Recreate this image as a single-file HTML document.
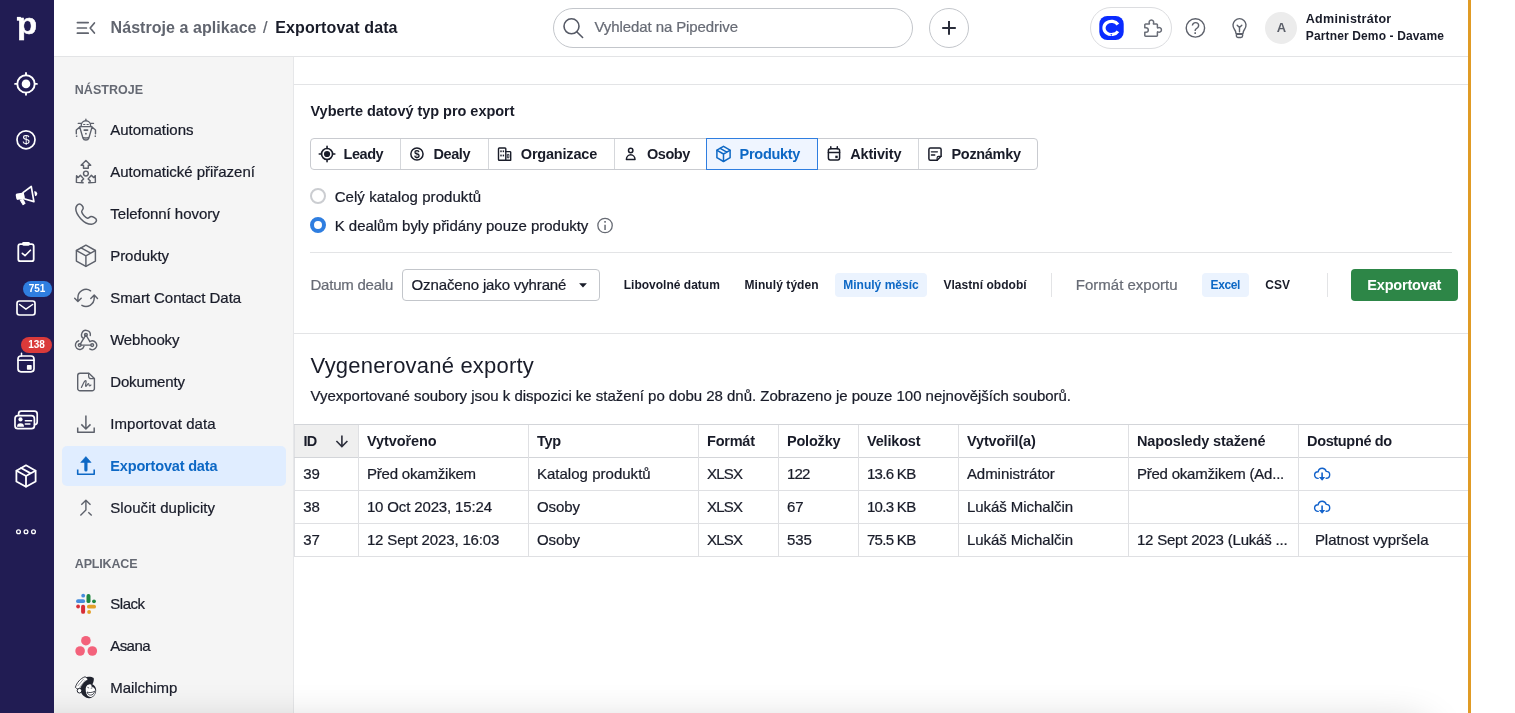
<!DOCTYPE html>
<html lang="cs"><head><meta charset="utf-8"><title>Exportovat data - Pipedrive</title>
<style>

*{box-sizing:border-box;margin:0;padding:0}
html,body{width:1515px;height:713px;overflow:hidden;background:#fff}
body{position:relative;font-family:"Liberation Sans",Arial,sans-serif;-webkit-font-smoothing:antialiased}
.b{position:absolute}
.t{position:absolute;white-space:pre;display:block}
#ico{position:absolute;left:0;top:0;width:1515px;height:713px;pointer-events:none;will-change:transform}
#txt{position:absolute;left:0;top:0;width:1515px;height:713px;will-change:transform}
#nav{left:0;top:0;width:54px;height:713px;background:#211c53}
#hdr{left:54px;top:0;width:1414px;height:57px;background:#fff;border-bottom:1px solid #e3e4e6}
#side{left:54px;top:57px;width:240px;height:656px;background:#f5f5f5;border-right:1px solid #e6e7e9}
#act{left:62px;top:446px;width:224px;height:40px;background:#e0edff;border-radius:5px}
#orange{left:1468px;top:0;width:3px;height:713px;background:#e09b25}
.hl{position:absolute;height:1px;background:#e3e4e6}
.vl{position:absolute;width:1px;background:#e3e4e6}
.pill{position:absolute;border:1px solid #c3c6cb;background:#fff}
.chip{position:absolute;background:#ebf3fe;border-radius:4px}
.badge{position:absolute;border-radius:8px;height:16px}
#tbl{left:294px;top:424px;width:1174px;height:133px;border-left:1px solid #dfe0e3}

</style></head>
<body>

<div class="b" id="nav"></div>
<div class="b" id="hdr"></div>
<div class="b" id="side"></div>
<div class="b" id="act"></div>
<div class="b" style="left:54px;top:0;width:1414px;height:713px;overflow:hidden"><div class="b" style="left:-60px;top:724px;width:1436px;height:60px;border-radius:20px;box-shadow:0 0 40px 0 rgba(0,0,0,0.2)"></div></div>
<div class="b" id="orange"></div>
<!-- header widgets -->
<div class="pill" style="left:553px;top:8px;width:360px;height:40px;border-radius:20px"></div>
<div class="pill" style="left:929px;top:8px;width:40px;height:40px;border-radius:20px"></div>
<div class="pill" style="left:1090px;top:7px;width:82px;height:42px;border-radius:21px;border-color:#dcdde0"></div>
<div class="b" style="left:1265.4px;top:11.9px;width:32px;height:32px;border-radius:16px;background:#ececec"></div>
<div class="badge" style="left:22.5px;top:281px;width:29.5px;background:#2f7ee0"></div>
<div class="badge" style="left:21.3px;top:337px;width:30.7px;background:#da3a3a"></div>
<!-- main lines -->
<div class="hl" style="left:294px;top:84px;width:1174px"></div>
<div class="hl" style="left:310px;top:252px;width:1142px"></div>
<div class="hl" style="left:294px;top:333px;width:1174px"></div>
<!-- segmented buttons -->
<div class="b" style="left:310px;top:138px;width:728px;height:32px;border:1px solid #c9cbd0;border-radius:4px;background:#fff"></div>
<div class="vl" style="left:400px;top:139px;height:30px;background:#d5d7db"></div>
<div class="vl" style="left:488px;top:139px;height:30px;background:#d5d7db"></div>
<div class="vl" style="left:614px;top:139px;height:30px;background:#d5d7db"></div>
<div class="vl" style="left:918px;top:139px;height:30px;background:#d5d7db"></div>
<div class="b" style="left:706px;top:138px;width:112px;height:32px;border:1px solid #2f7ee0;background:#eff5ff"></div>
<!-- radios -->
<div class="b" style="left:310px;top:188px;width:16px;height:16px;border-radius:8px;border:2px solid #cbcdd1;background:#fff"></div>
<div class="b" style="left:310px;top:217px;width:16px;height:16px;border-radius:8px;border:4px solid #2f7ee0;background:#fff"></div>
<!-- filter row -->
<div class="b" style="left:402px;top:269px;width:198px;height:32px;border:1px solid #c3c6cb;border-radius:4px;background:#fff"></div>
<div class="chip" style="left:834.7px;top:273px;width:92.6px;height:24px"></div>
<div class="chip" style="left:1201.8px;top:273px;width:47.2px;height:24px"></div>
<div class="vl" style="left:1051px;top:273px;height:24px"></div>
<div class="vl" style="left:1327px;top:273px;height:24px"></div>
<div class="b" style="left:1351px;top:269px;width:107px;height:32px;border-radius:4px;background:#2d8647"></div>
<!-- table -->
<div class="b" id="tbl"></div>
<div class="b" style="left:295px;top:425px;width:63px;height:32px;background:#efefef"></div>
<div class="hl" style="left:294px;top:424px;width:1174px;background:#d3d5d9"></div>
<div class="hl" style="left:294px;top:457px;width:1174px;background:#d3d5d9"></div>
<div class="hl" style="left:294px;top:490px;width:1174px;background:#dfe0e3"></div>
<div class="hl" style="left:294px;top:523px;width:1174px;background:#dfe0e3"></div>
<div class="hl" style="left:294px;top:556px;width:1174px;background:#dfe0e3"></div>
<div class="vl" style="left:358px;top:425px;height:131px;background:#dfe0e3"></div>
<div class="vl" style="left:528px;top:425px;height:131px;background:#dfe0e3"></div>
<div class="vl" style="left:698px;top:425px;height:131px;background:#dfe0e3"></div>
<div class="vl" style="left:778px;top:425px;height:131px;background:#dfe0e3"></div>
<div class="vl" style="left:858px;top:425px;height:131px;background:#dfe0e3"></div>
<div class="vl" style="left:958px;top:425px;height:131px;background:#dfe0e3"></div>
<div class="vl" style="left:1128px;top:425px;height:131px;background:#dfe0e3"></div>
<div class="vl" style="left:1298px;top:425px;height:131px;background:#dfe0e3"></div>
<svg id="ico" width="1515" height="713" viewBox="0 0 1515 713">
<text transform="translate(17.1 33.6) scale(1.13 1)" x="0" y="0" font-family="Liberation Sans,Arial,sans-serif" font-weight="700" font-size="29.3" fill="#fff" stroke="#fff" stroke-width="0.4" stroke-linejoin="round">p</text>
<rect x="16.900" y="16.900" width="4" height="3.800" fill="#fff"/>
<g fill="none" stroke="#fff" stroke-width="1.9" stroke-linecap="round" stroke-linejoin="round" ><circle cx="26" cy="83.9" r="8.7"/><path d="M26 73v2M26 92.800v2M15.100 83.900h2M34.900 83.900h2"/></g><circle cx="26" cy="83.9" r="4.3" fill="#fff"/>
<g fill="none" stroke="#fff" stroke-width="1.7" stroke-linecap="round" stroke-linejoin="round" ><circle cx="26" cy="139.8" r="9"/></g><text x="26" y="144.400" text-anchor="middle" font-family="Liberation Sans,Arial,sans-serif" font-size="13" fill="#fff">$</text>
<g transform="translate(0 -1.2) rotate(-10 26 196)"><rect x="15.800" y="193.200" width="8.200" height="6.400" rx="1.600" fill="#fff"/><path d="M23.400 193.300 L32.600 188.700 L32.600 204.100 L23.400 199.500 Z" fill="none" stroke="#fff" stroke-width="1.700" stroke-linejoin="round"/><path d="M19.400 200 L21.400 205.200 L23.600 204.300 L22.300 200 Z" fill="#fff" stroke="#fff" stroke-width="1" stroke-linejoin="round"/><path d="M34.700 193.900 a2.500 2.500 0 0 1 0 5 Z" fill="#fff"/></g>
<g fill="none" stroke="#fff" stroke-width="1.8" stroke-linecap="round" stroke-linejoin="round" ><rect x="18.3" y="244.2" width="15.4" height="17" rx="2"/><path d="M22.3 253.3l2.7 2.4 5.4-5.5" stroke-width="1.6"/></g><rect x="22.1" y="241.9" width="7.8" height="3.8" rx="1.4" fill="#fff"/>
<g fill="none" stroke="#fff" stroke-width="1.7" stroke-linecap="round" stroke-linejoin="round" ><rect x="17" y="301" width="18" height="14" rx="2.4"/><path d="M19.6 304.5l6.3 4.7 6.7-4.7" stroke-width="1.5"/></g>
<g fill="none" stroke="#fff" stroke-width="1.7" stroke-linecap="round" stroke-linejoin="round" ><rect x="18" y="356" width="16" height="15.8" rx="3"/><path d="M18 360.2h16M21.5 353.2v2.8" stroke-width="1.5"/></g><rect x="26.9" y="364.9" width="4.8" height="4.8" rx="0.8" fill="#fff"/>
<g fill="none" stroke="#fff" stroke-width="1.7" stroke-linecap="round" stroke-linejoin="round" ><rect x="15" y="415.7" width="19.4" height="13" rx="3"/><path d="M18.6 415 v-1.2 a2.6 2.6 0 0 1 2.6 -2.6 h13.2 a2.8 2.8 0 0 1 2.8 2.8 v8 a2.6 2.6 0 0 1 -2.6 2.6"/><path d="M25.3 420.8h6.3M25.3 424h4.6" stroke-width="1.5"/></g><circle cx="20.5" cy="419.4" r="2.1" fill="#fff"/><path d="M17 426.7a3.5 3.4 0 0 1 7 0z" fill="#fff"/>
<g fill="none" stroke="#fff" stroke-width="1.8" stroke-linecap="round" stroke-linejoin="round" ><path d="M26 465.3l9.6 5.4v10.8l-9.6 5.3-9.6-5.3v-10.8z"/><path d="M16.6 470.8l9.4 5.2 9.4-5.2M26 476v10.6M21.1 468l9.6 5.4"/></g>
<g fill="none" stroke="#fff" stroke-width="1.3" stroke-linecap="round" stroke-linejoin="round" ><circle cx="18.5" cy="531.8" r="1.9"/><circle cx="26" cy="531.8" r="1.9"/><circle cx="33.5" cy="531.8" r="1.9"/></g>
<g fill="none" stroke="#61656f" stroke-width="1.7" stroke-linecap="round" stroke-linejoin="round" ><path d="M77.4 22.6h10.8M77.4 28h9M77.4 33.2h10.8M94.4 23l-4.2 5 4.2 5"/></g>
<g fill="none" stroke="#555965" stroke-width="1.6" stroke-linecap="round" stroke-linejoin="round" ><circle cx="571.5" cy="26.3" r="7.5"/><path d="M577 32l5.6 5.5"/></g>
<g fill="none" stroke="#2a2d3a" stroke-width="2" stroke-linecap="round" stroke-linejoin="round" ><path d="M942.2 27.9h13.6M949 21.1v13.6" stroke-linecap="butt"/></g>
<rect x="1099.3" y="15.9" width="24.4" height="24.1" rx="8" fill="#0a2bff"/>
<path d="M1117.9 24.5 A7.5 6.6 0 1 0 1117.9 31.3" fill="none" stroke="#fff" stroke-width="3.2" stroke-linecap="butt"/><path d="M1110.3 34.3l1 1.7 1-1.7z" fill="#0a2bff"/>
<g fill="none" stroke="#696d77" stroke-width="1.5" stroke-linecap="round" stroke-linejoin="round" ><path d="M1145.6 24h3.4c.3 0 .5-.3.4-.6a2.3 2.3 0 1 1 4 0c-.2.3 0 .6.4.6h2.8a.8 .8 0 0 1 .8 .8v2.700c0 .3.300 .5.600 .4a2.300 2.300 0 1 1 0 4c-.3-.2-.6 0-.6.400v3.200a.8 .8 0 0 1-.8 .8h-11a.8 .8 0 0 1-.8-.8v-3.200h1.200a2.300 2.300 0 1 0 0-4.600h-1.200v-2.900a.8 .8 0 0 1 .8-.8z"/></g>
<g fill="none" stroke="#5d616b" stroke-width="1.4" stroke-linecap="round" stroke-linejoin="round" ><circle cx="1195.4" cy="27.9" r="9.2"/></g><text x="1195.400" y="33.600" text-anchor="middle" font-family="Liberation Sans,Arial,sans-serif" font-size="16" fill="#5d616b">?</text>
<g fill="none" stroke="#5d616b" stroke-width="1.4" stroke-linecap="round" stroke-linejoin="round" ><path d="M1236 33.600c0-2.200-.5-3-1.600-4.400a6.500 6.500 0 1 1 10.200 0c-1.100 1.400-1.600 2.200-1.600 4.400z"/><path d="M1236.400 34.4h6.200v1.400a1.700 1.700 0 0 1-1.700 1.700h-2.800a1.700 1.700 0 0 1-1.700-1.700z"/><path d="M1239.500 31.800v-4.200l-2.300-2.300M1239.500 27.600l2.300-2.300"/></g>
<g fill="none" stroke="#5d616b" stroke-width="1.4" stroke-linecap="round" stroke-linejoin="round" ><path d="M85.900 119.200v1.600M81.200 126.400v-.9a4.700 4.700 0 0 1 9.400 0v.9M78.300 123.400h2.900M90.600 123.400h2.900M79.800 126.600h12.200M79.700 126.900l3.200 11a3.200 3.200 0 0 0 6 0l3.200-11M83.500 137.700a4 1.500 0 0 0 4.800 0M79.500 127.300l-3.200 2.700v3.800M92.300 127.300l3.200 2.700v3.800"/><path d="M84.300 130.100h3.200" stroke-width="1.800"/><path d="M83.600 124.500h1.300M87 124.500h1.300" stroke-width="1.100"/></g><rect x="85.100" y="132.900" width="1.600" height="1.600" fill="#5d616b"/><rect x="75.900" y="135.500" width="1.400" height="1.400" fill="#5d616b"/><rect x="94.600" y="135.500" width="1.400" height="1.400" fill="#5d616b"/>
<g fill="none" stroke="#5d616b" stroke-width="1.45" stroke-linecap="round" stroke-linejoin="round" ><path d="M85.900 160.500l4.800 4.700h-2.400v3h-4.800v-3h-2.400z"/><g transform="rotate(133 85.900 173.500)"><path d="M85.900 160.500l4.800 4.700h-2.400v3h-4.800v-3h-2.400z"/></g><g transform="rotate(-133 85.900 173.500)"><path d="M85.900 160.500l4.800 4.700h-2.400v3h-4.800v-3h-2.400z"/></g><circle cx="85.900" cy="173.500" r="2.400"/></g>
<g fill="none" stroke="#5d616b" stroke-width="1.5" stroke-linecap="round" stroke-linejoin="round" ><path d="M79.600 203.900c1.300 0 3.900 2.900 3.600 4.500-.2 1.300-1.800 2-1.500 3.500.5 2.300 3.800 5.700 5.800 6.300 1.300.4 2.200-1.700 3.500-1.800 1.700-.1 5.500 2 5.500 3.800 0 2-3 4.100-5 4.100-7.800 0-15.700-9.900-15.700-15.500 0-2.300 1.700-4.900 3.800-4.900z"/></g>
<g fill="none" stroke="#5d616b" stroke-width="1.45" stroke-linecap="round" stroke-linejoin="round" ><path d="M85.900 245.200l9.500 5.300v10.600l-9.500 5.300-9.500-5.300v-10.600z"/><path d="M76.600 250.600l9.300 5.200 9.300-5.200M85.900 255.800v10.400M81.100 247.900l9.500 5.300"/></g>
<g fill="none" stroke="#5d616b" stroke-width="1.45" stroke-linecap="round" stroke-linejoin="round" ><path d="M90.600 290.800a8.200 8.200 0 0 0-12.700 7v3.400M74.700 298.300l3.200 3.200 3.300-3.200M81.900 305.300a8.200 8.200 0 0 0 12.300-7.200v-2.600M90.800 298.400l3.400-3.300 3.300 3.300"/></g>
<g fill="none" stroke="#5d616b" stroke-width="1.4" stroke-linecap="round" stroke-linejoin="round" ><circle cx="85.900" cy="334.800" r="1.400"/><circle cx="79.700" cy="345.100" r="1.400"/><circle cx="92.200" cy="345.100" r="1.400"/><path d="M85.900 334.800l-5.800 9.600M86.300 335.500l3.600 6.200M81.200 345.100h9.600"/><path d="M83.600 338.500a4.400 4.400 0 1 1 6.700-3"/><path d="M78.700 340.800a4.400 4.400 0 1 0 5.300 5.500"/><path d="M90 341.500a4.400 4.400 0 1 1-.3 7.400"/></g>
<g fill="none" stroke="#5d616b" stroke-width="1.4" stroke-linecap="round" stroke-linejoin="round" ><path d="M80 373.200h8.900l5.500 5.300v10a2.300 2.300 0 0 1-2.300 2.300h-12.100a2.300 2.300 0 0 1-2.300-2.300v-13a2.300 2.300 0 0 1 2.300-2.300z"/><path d="M88.600 373.400v2.500a2.800 2.800 0 0 0 2.800 2.800h2.800" stroke-width="1.200"/><path d="M81.400 387.400c1.500-2.600 2.800-7 4.300-6.800 1.300.2-1 5.600.2 5.700 1 .1 1.500-2.900 2.500-2.800.9.100.3 2.400 1.200 2.500.6 0 1-.6 1.300-1" stroke-width="1.200"/></g>
<g fill="none" stroke="#5d616b" stroke-width="1.5" stroke-linecap="round" stroke-linejoin="round" ><path d="M85.900 415.400v13.400M81.300 424.400l4.600 4.600 4.600-4.600M77.700 427.600v4.700h16.500v-4.700" stroke-linecap="butt"/></g>
<g fill="none" stroke="#0d68c5" stroke-width="1.6" stroke-linecap="round" stroke-linejoin="round" ><path d="M77.700 469.600v4.700h16.500v-4.700" stroke-linecap="butt"/></g><path d="M85.900 456.600l5.200 5.800h-10.400z" fill="#0d68c5" stroke="#0d68c5" stroke-width="0.6" stroke-linejoin="round"/><rect x="84.300" y="461" width="3.200" height="10.600" rx="1.500" fill="#0d68c5"/>
<g fill="none" stroke="#5d616b" stroke-width="1.4" stroke-linecap="round" stroke-linejoin="round" ><path d="M81.300 504.700l4.600-4.400 4.600 4.400M85.900 500.600v9.500l-5.500 5.400M88.300 512.300l3.400 3.200" stroke-linecap="butt"/></g>
<g><circle cx="83.200" cy="595.700" r="1.900" fill="#468cdc"/><rect x="76.100" y="599.200" width="9" height="3.900" rx="1.900" fill="#468cdc"/><rect x="86.500" y="594" width="4" height="9.100" rx="1.900" fill="#1e8741"/><circle cx="94" cy="601.300" r="1.900" fill="#1e8741"/><circle cx="78.100" cy="606.500" r="1.900" fill="#d72d37"/><rect x="81.100" y="604.700" width="4" height="9.100" rx="1.900" fill="#d72d37"/><rect x="87" y="604.700" width="9" height="3.900" rx="1.900" fill="#e4a028"/><circle cx="89.100" cy="612" r="1.900" fill="#e4a028"/></g>
<g fill="#f3627b"><circle cx="85.900" cy="640.700" r="4.800"/><circle cx="80.100" cy="651" r="4.800"/><circle cx="92.300" cy="651" r="4.800"/></g>
<g><path d="M84.300 677.600c3-1.200 7.400-1 9.400.400.500 2-.3 4.600-1.400 6.300 2.300.8 4.100 3.800 3.900 6.500-.3 4-3.500 7.600-7.200 7.400-3.600-.2-6.600-3-8.200-6-1.500-2.800-1.500-6.600-.6-9.200.7-2.100 2.300-4.300 4.100-5.400z" fill="#20232e"/><path d="M75.4 687.4C76.5 683 80.5 678.2 85 676.8C86.5 677.3 87.6 678.4 88 679.8C84.8 681.4 81.8 685 80.2 689.3C78.4 689.4 76.3 688.6 75.4 687.4Z" fill="#fff" stroke="#20232e" stroke-width="0.9" stroke-linejoin="round"/><path d="M77.6 686.1l6.200-7.300M79.4 687.7l6-7.600" stroke="#20232e" stroke-width="0.45" fill="none"/><circle cx="79.500" cy="690.700" r="2.300" fill="#fff" stroke="#20232e" stroke-width="1"/><path d="M85.700 689.500c0-3.400 2.300-5.600 4.700-5.400 1 .1 1.300 1.500 1 2.500 1.900.3 4 2.100 4 4.300 0 3.500-2.400 6-5 6-2.700 0-4.700-3.300-4.700-7.400z" fill="#fff"/><path d="M87 692c2.200 1 5.600.6 7.600-.8-.3 2.400-2 3.900-4 3.900-1.800 0-3.200-1.400-3.600-3.100z" fill="#fff" stroke="#20232e" stroke-width="0.800"/><path d="M87.400 687.300l1.700.7M90.800 688.300l1.700-.5M86.800 684.800c1.500-1 3.600-1 4.700-.2" stroke="#20232e" stroke-width="0.700" fill="none"/></g>
<g fill="none" stroke="#191c29" stroke-width="1.6" stroke-linecap="round" stroke-linejoin="round" ><circle cx="327.050" cy="154" r="5.500"/><path d="M327.050 146.200v2.200M327.050 159.600v2.200M319.250 154h2.200M332.650 154h2.200"/></g><circle cx="327.050" cy="154" r="3.100" fill="#191c29"/>
<g fill="none" stroke="#191c29" stroke-width="1.5" stroke-linecap="round" stroke-linejoin="round" ><circle cx="416.950" cy="154" r="6.100"/></g><text x="416.950" y="157.7" text-anchor="middle" font-family="Liberation Sans,Arial,sans-serif" font-weight="700" font-size="10.5" fill="#191c29">$</text>
<g fill="none" stroke="#191c29" stroke-width="1.4" stroke-linecap="round" stroke-linejoin="round" ><rect x="498.500" y="148" width="7.300" height="12.200" rx="0.800"/><path d="M505.800 151.600h4a.9 .9 0 0 1 .9 .9v7.700h-4.900"/><path d="M507.700 154.400h1.200v3.400h-1.200z" stroke-width="0.900"/></g><g fill="#191c29"><rect x="500.300" y="150.400" width="1.400" height="1.800"/><rect x="502.700" y="150.400" width="1.400" height="1.800"/><rect x="500.300" y="154.600" width="1.400" height="1.800"/><rect x="502.700" y="154.600" width="1.400" height="1.800"/></g>
<g fill="none" stroke="#191c29" stroke-width="1.5" stroke-linecap="round" stroke-linejoin="round" ><circle cx="630.700" cy="150.500" r="2.200"/><path d="M626.400 159.400a4.300 4.600 0 0 1 8.600 0z"/></g>
<g fill="none" stroke="#0d68c5" stroke-width="1.5" stroke-linecap="round" stroke-linejoin="round" ><path d="M723.500 146.300l6.600 3.800v7.600l-6.600 3.800-6.600-3.800v-7.600z"/><path d="M717.100 150.300l6.400 3.700 6.400-3.700M723.500 154v7.300M720.200 148.300l6.600 3.800"/></g>
<g fill="none" stroke="#191c29" stroke-width="1.5" stroke-linecap="round" stroke-linejoin="round" ><rect x="828.400" y="148.700" width="11.200" height="11.200" rx="1.800"/><path d="M828.400 152.500h11.200M830.800 146.700v2M837.300 146.700v2"/></g><rect x="835.300" y="155.700" width="2.400" height="2.400" fill="#191c29"/>
<g fill="none" stroke="#191c29" stroke-width="1.5" stroke-linecap="round" stroke-linejoin="round" ><path d="M930.400 148.100h9.200a1.500 1.500 0 0 1 1.500 1.500v6.700l-4 4h-6.700a1.500 1.500 0 0 1-1.500-1.500v-9.200a1.500 1.500 0 0 1 1.500-1.500z"/><path d="M941 156.400h-2.400a1.500 1.500 0 0 0-1.500 1.500v2.300" stroke-width="1.200"/><path d="M931.400 151.800h6M931.400 155h3.400" stroke-width="1.300"/></g>
<g fill="none" stroke="#666a73" stroke-width="1.3" stroke-linecap="round" stroke-linejoin="round" ><circle cx="605.050" cy="225.500" r="7.200"/><path d="M605.050 224.700v5.200" stroke-width="1.500" stroke-linecap="butt"/></g><rect x="604.250" y="221" width="1.600" height="1.700" fill="#666a73"/>
<path d="M579.100 283.300h7.800l-3.900 4.200z" fill="#191c29"/>
<g fill="none" stroke="#2a2d3a" stroke-width="1.6" stroke-linecap="round" stroke-linejoin="round" ><path d="M341.900 435.400v10.800M336.400 441l5.500 5.500 5.500-5.500" stroke-linecap="butt" stroke-linejoin="miter"/></g>
<g fill="none" stroke="#1262cb" stroke-width="1.4" stroke-linecap="round" stroke-linejoin="round" ><path d="M1318.200 478.4c-2.100.100-3.600-1.500-3.600-3.300 0-1.900 1.500-3.300 3.500-3.300.4-2 2.100-3.500 4.100-3.500 1.900 0 3.500 1.300 4 3.100 2 0 3.500 1.500 3.500 3.400 0 1.900-1.500 3.500-3.600 3.500"/><path d="M1322.100 472.4v5" stroke-width="1.600" stroke-linecap="butt"/></g><path d="M1319 477h6.200l-3.100 3.800z" fill="#1262cb"/>
<g fill="none" stroke="#1262cb" stroke-width="1.4" stroke-linecap="round" stroke-linejoin="round" ><path d="M1318.200 511.4c-2.100.100-3.600-1.500-3.600-3.300 0-1.900 1.500-3.300 3.500-3.300.4-2 2.100-3.500 4.100-3.500 1.900 0 3.500 1.300 4 3.100 2 0 3.500 1.500 3.500 3.400 0 1.900-1.500 3.500-3.600 3.500"/><path d="M1322.100 505.4v5" stroke-width="1.600" stroke-linecap="butt"/></g><path d="M1319 510h6.200l-3.100 3.800z" fill="#1262cb"/>
</svg>
<div id="txt">
<span class="t" style="left:110.60px;top:17.36px;font-size:16px;line-height:22px;color:#61656f;font-weight:700;letter-spacing:0.052px;">Nástroje a aplikace</span>
<span class="t" style="left:263.00px;top:17.36px;font-size:16px;line-height:22px;color:#61656f;-webkit-text-stroke:0.22px;">/</span>
<span class="t" style="left:275.30px;top:17.36px;font-size:16px;line-height:22px;color:#191c29;font-weight:700;letter-spacing:0.091px;">Exportovat data</span>
<span class="t" style="left:594.50px;top:16.10px;font-size:15px;line-height:21px;color:#676b75;-webkit-text-stroke:0.22px;letter-spacing:-0.094px;">Vyhledat na Pipedrive</span>
<span class="t" style="left:1276.70px;top:18.90px;font-size:13px;line-height:18px;color:#5b5f69;font-weight:700;">A</span>
<span class="t" style="left:1305.80px;top:9.87px;font-size:12.5px;line-height:18px;color:#191c29;font-weight:700;letter-spacing:0.287px;">Administrátor</span>
<span class="t" style="left:1305.80px;top:28.44px;font-size:12px;line-height:17px;color:#191c29;font-weight:700;letter-spacing:0.135px;">Partner Demo - Davame</span>
<span class="t" style="left:28.76px;top:281.74px;font-size:10px;line-height:14px;color:#fff;font-weight:700;">751</span>
<span class="t" style="left:28.26px;top:337.74px;font-size:10px;line-height:14px;color:#fff;font-weight:700;">138</span>
<span class="t" style="left:74.80px;top:81.37px;font-size:12.5px;line-height:18px;color:#656973;font-weight:700;letter-spacing:0.032px;">NÁSTROJE</span>
<span class="t" style="left:110.20px;top:119.10px;font-size:15px;line-height:21px;color:#191c29;-webkit-text-stroke:0.22px;letter-spacing:-0.009px;">Automations</span>
<span class="t" style="left:110.20px;top:161.10px;font-size:15px;line-height:21px;color:#191c29;-webkit-text-stroke:0.22px;letter-spacing:-0.019px;">Automatické přiřazení</span>
<span class="t" style="left:110.20px;top:203.10px;font-size:15px;line-height:21px;color:#191c29;-webkit-text-stroke:0.22px;letter-spacing:-0.039px;">Telefonní hovory</span>
<span class="t" style="left:110.20px;top:245.30px;font-size:15px;line-height:21px;color:#191c29;-webkit-text-stroke:0.22px;letter-spacing:-0.043px;">Produkty</span>
<span class="t" style="left:110.20px;top:287.10px;font-size:15px;line-height:21px;color:#191c29;-webkit-text-stroke:0.22px;letter-spacing:-0.048px;">Smart Contact Data</span>
<span class="t" style="left:110.20px;top:329.10px;font-size:15px;line-height:21px;color:#191c29;-webkit-text-stroke:0.22px;letter-spacing:-0.201px;">Webhooky</span>
<span class="t" style="left:110.20px;top:371.20px;font-size:15px;line-height:21px;color:#191c29;-webkit-text-stroke:0.22px;letter-spacing:-0.122px;">Dokumenty</span>
<span class="t" style="left:110.20px;top:413.20px;font-size:15px;line-height:21px;color:#191c29;-webkit-text-stroke:0.22px;letter-spacing:0.083px;">Importovat data</span>
<span class="t" style="left:110.30px;top:455.58px;font-size:14.5px;line-height:20px;color:#0d68c5;font-weight:700;letter-spacing:-0.171px;">Exportovat data</span>
<span class="t" style="left:110.20px;top:497.10px;font-size:15px;line-height:21px;color:#191c29;-webkit-text-stroke:0.22px;letter-spacing:0.094px;">Sloučit duplicity</span>
<span class="t" style="left:110.20px;top:592.90px;font-size:15px;line-height:21px;color:#191c29;-webkit-text-stroke:0.22px;letter-spacing:-0.447px;">Slack</span>
<span class="t" style="left:110.20px;top:635.00px;font-size:15px;line-height:21px;color:#191c29;-webkit-text-stroke:0.22px;letter-spacing:-0.537px;">Asana</span>
<span class="t" style="left:110.20px;top:677.00px;font-size:15px;line-height:21px;color:#191c29;-webkit-text-stroke:0.22px;letter-spacing:-0.052px;">Mailchimp</span>
<span class="t" style="left:74.80px;top:555.17px;font-size:12.5px;line-height:18px;color:#656973;font-weight:700;letter-spacing:-0.172px;">APLIKACE</span>
<span class="t" style="left:310.50px;top:101.48px;font-size:14.5px;line-height:20px;color:#191c29;font-weight:700;letter-spacing:-0.033px;">Vyberte datový typ pro export</span>
<span class="t" style="left:343.60px;top:143.88px;font-size:14.5px;line-height:20px;color:#191c29;font-weight:700;letter-spacing:-0.480px;">Leady</span>
<span class="t" style="left:433.40px;top:143.88px;font-size:14.5px;line-height:20px;color:#191c29;font-weight:700;letter-spacing:-0.376px;">Dealy</span>
<span class="t" style="left:520.80px;top:143.88px;font-size:14.5px;line-height:20px;color:#191c29;font-weight:700;letter-spacing:-0.197px;">Organizace</span>
<span class="t" style="left:647.00px;top:143.88px;font-size:14.5px;line-height:20px;color:#191c29;font-weight:700;letter-spacing:-0.481px;">Osoby</span>
<span class="t" style="left:739.60px;top:143.88px;font-size:14.5px;line-height:20px;color:#0d68c5;font-weight:700;letter-spacing:-0.292px;">Produkty</span>
<span class="t" style="left:850.20px;top:143.88px;font-size:14.5px;line-height:20px;color:#191c29;font-weight:700;letter-spacing:-0.156px;">Aktivity</span>
<span class="t" style="left:951.50px;top:143.88px;font-size:14.5px;line-height:20px;color:#191c29;font-weight:700;letter-spacing:-0.319px;">Poznámky</span>
<span class="t" style="left:334.70px;top:185.90px;font-size:15px;line-height:21px;color:#191c29;-webkit-text-stroke:0.22px;letter-spacing:0.060px;">Celý katalog produktů</span>
<span class="t" style="left:334.70px;top:214.50px;font-size:15px;line-height:21px;color:#191c29;-webkit-text-stroke:0.22px;letter-spacing:-0.018px;">K dealům byly přidány pouze produkty</span>
<span class="t" style="left:310.50px;top:274.00px;font-size:15px;line-height:21px;color:#676b75;-webkit-text-stroke:0.22px;letter-spacing:-0.226px;">Datum dealu</span>
<span class="t" style="left:411.60px;top:274.00px;font-size:15px;line-height:21px;color:#191c29;-webkit-text-stroke:0.22px;letter-spacing:-0.140px;">Označeno jako vyhrané</span>
<span class="t" style="left:623.70px;top:276.84px;font-size:12px;line-height:17px;color:#191c29;font-weight:700;letter-spacing:0.014px;">Libovolné datum</span>
<span class="t" style="left:744.50px;top:276.84px;font-size:12px;line-height:17px;color:#191c29;font-weight:700;letter-spacing:0.069px;">Minulý týden</span>
<span class="t" style="left:843.20px;top:276.84px;font-size:12px;line-height:17px;color:#0d68c5;font-weight:700;letter-spacing:0.022px;">Minulý měsíc</span>
<span class="t" style="left:943.40px;top:276.84px;font-size:12px;line-height:17px;color:#191c29;font-weight:700;letter-spacing:0.041px;">Vlastní období</span>
<span class="t" style="left:1075.80px;top:274.20px;font-size:15px;line-height:21px;color:#676b75;-webkit-text-stroke:0.22px;">Formát exportu</span>
<span class="t" style="left:1210.60px;top:276.84px;font-size:12px;line-height:17px;color:#0d68c5;font-weight:700;letter-spacing:-0.390px;">Excel</span>
<span class="t" style="left:1265.30px;top:276.84px;font-size:12px;line-height:17px;color:#191c29;font-weight:700;letter-spacing:-0.044px;">CSV</span>
<span class="t" style="left:1367.30px;top:274.98px;font-size:14.5px;line-height:20px;color:#fff;font-weight:700;letter-spacing:-0.183px;">Exportovat</span>
<span class="t" style="left:310.60px;top:350.08px;font-size:22px;line-height:31px;color:#191c29;letter-spacing:0.204px;">Vygenerované exporty</span>
<span class="t" style="left:310.60px;top:385.10px;font-size:15px;line-height:21px;color:#191c29;-webkit-text-stroke:0.22px;letter-spacing:-0.026px;">Vyexportované soubory jsou k dispozici ke stažení po dobu 28 dnů. Zobrazeno je pouze 100 nejnovějších souborů.</span>
<span class="t" style="left:303.60px;top:430.78px;font-size:14.5px;line-height:20px;color:#191c29;font-weight:700;letter-spacing:-0.750px;">ID</span>
<span class="t" style="left:367.00px;top:430.78px;font-size:14.5px;line-height:20px;color:#191c29;font-weight:700;letter-spacing:-0.084px;">Vytvořeno</span>
<span class="t" style="left:537.00px;top:430.78px;font-size:14.5px;line-height:20px;color:#191c29;font-weight:700;letter-spacing:-0.273px;">Typ</span>
<span class="t" style="left:707.00px;top:430.78px;font-size:14.5px;line-height:20px;color:#191c29;font-weight:700;letter-spacing:-0.222px;">Formát</span>
<span class="t" style="left:787.00px;top:430.78px;font-size:14.5px;line-height:20px;color:#191c29;font-weight:700;letter-spacing:-0.205px;">Položky</span>
<span class="t" style="left:867.00px;top:430.78px;font-size:14.5px;line-height:20px;color:#191c29;font-weight:700;letter-spacing:-0.175px;">Velikost</span>
<span class="t" style="left:967.00px;top:430.78px;font-size:14.5px;line-height:20px;color:#191c29;font-weight:700;letter-spacing:-0.158px;">Vytvořil(a)</span>
<span class="t" style="left:1137.00px;top:430.78px;font-size:14.5px;line-height:20px;color:#191c29;font-weight:700;letter-spacing:-0.129px;">Naposledy stažené</span>
<span class="t" style="left:1307.00px;top:430.78px;font-size:14.5px;line-height:20px;color:#191c29;font-weight:700;letter-spacing:-0.341px;">Dostupné do</span>
<span class="t" style="left:303.20px;top:463.30px;font-size:15px;line-height:21px;color:#191c29;-webkit-text-stroke:0.22px;letter-spacing:-0.083px;">39</span>
<span class="t" style="left:366.90px;top:463.30px;font-size:15px;line-height:21px;color:#191c29;-webkit-text-stroke:0.22px;letter-spacing:-0.193px;">Před okamžikem</span>
<span class="t" style="left:536.90px;top:463.30px;font-size:15px;line-height:21px;color:#191c29;-webkit-text-stroke:0.22px;letter-spacing:0.025px;">Katalog produktů</span>
<span class="t" style="left:706.90px;top:463.30px;font-size:15px;line-height:21px;color:#191c29;-webkit-text-stroke:0.22px;letter-spacing:-0.750px;">XLSX</span>
<span class="t" style="left:786.90px;top:463.30px;font-size:15px;line-height:21px;color:#191c29;-webkit-text-stroke:0.22px;letter-spacing:-0.750px;">122</span>
<span class="t" style="left:866.90px;top:463.30px;font-size:15px;line-height:21px;color:#191c29;-webkit-text-stroke:0.22px;letter-spacing:-0.679px;">13.6 KB</span>
<span class="t" style="left:966.90px;top:463.30px;font-size:15px;line-height:21px;color:#191c29;-webkit-text-stroke:0.22px;letter-spacing:-0.037px;">Administrátor</span>
<span class="t" style="left:1136.90px;top:463.30px;font-size:15px;line-height:21px;color:#191c29;-webkit-text-stroke:0.22px;letter-spacing:-0.216px;">Před okamžikem (Ad...</span>
<span class="t" style="left:303.20px;top:496.30px;font-size:15px;line-height:21px;color:#191c29;-webkit-text-stroke:0.22px;letter-spacing:-0.083px;">38</span>
<span class="t" style="left:366.90px;top:496.30px;font-size:15px;line-height:21px;color:#191c29;-webkit-text-stroke:0.22px;letter-spacing:-0.142px;">10 Oct 2023, 15:24</span>
<span class="t" style="left:536.90px;top:496.30px;font-size:15px;line-height:21px;color:#191c29;-webkit-text-stroke:0.22px;letter-spacing:-0.054px;">Osoby</span>
<span class="t" style="left:706.90px;top:496.30px;font-size:15px;line-height:21px;color:#191c29;-webkit-text-stroke:0.22px;letter-spacing:-0.750px;">XLSX</span>
<span class="t" style="left:786.90px;top:496.30px;font-size:15px;line-height:21px;color:#191c29;-webkit-text-stroke:0.22px;letter-spacing:-0.083px;">67</span>
<span class="t" style="left:866.90px;top:496.30px;font-size:15px;line-height:21px;color:#191c29;-webkit-text-stroke:0.22px;letter-spacing:-0.679px;">10.3 KB</span>
<span class="t" style="left:966.90px;top:496.30px;font-size:15px;line-height:21px;color:#191c29;-webkit-text-stroke:0.22px;letter-spacing:-0.038px;">Lukáš Michalčin</span>
<span class="t" style="left:303.20px;top:529.30px;font-size:15px;line-height:21px;color:#191c29;-webkit-text-stroke:0.22px;letter-spacing:-0.083px;">37</span>
<span class="t" style="left:366.90px;top:529.30px;font-size:15px;line-height:21px;color:#191c29;-webkit-text-stroke:0.22px;letter-spacing:-0.146px;">12 Sept 2023, 16:03</span>
<span class="t" style="left:536.90px;top:529.30px;font-size:15px;line-height:21px;color:#191c29;-webkit-text-stroke:0.22px;letter-spacing:-0.054px;">Osoby</span>
<span class="t" style="left:706.90px;top:529.30px;font-size:15px;line-height:21px;color:#191c29;-webkit-text-stroke:0.22px;letter-spacing:-0.750px;">XLSX</span>
<span class="t" style="left:786.90px;top:529.30px;font-size:15px;line-height:21px;color:#191c29;-webkit-text-stroke:0.22px;letter-spacing:-0.063px;">535</span>
<span class="t" style="left:866.90px;top:529.30px;font-size:15px;line-height:21px;color:#191c29;-webkit-text-stroke:0.22px;letter-spacing:-0.679px;">75.5 KB</span>
<span class="t" style="left:966.90px;top:529.30px;font-size:15px;line-height:21px;color:#191c29;-webkit-text-stroke:0.22px;letter-spacing:-0.038px;">Lukáš Michalčin</span>
<span class="t" style="left:1136.90px;top:529.30px;font-size:15px;line-height:21px;color:#191c29;-webkit-text-stroke:0.22px;letter-spacing:-0.200px;">12 Sept 2023 (Lukáš ...</span>
<span class="t" style="left:1314.90px;top:529.30px;font-size:15px;line-height:21px;color:#191c29;-webkit-text-stroke:0.22px;letter-spacing:-0.040px;">Platnost vypršela</span>
</div>
</body></html>
